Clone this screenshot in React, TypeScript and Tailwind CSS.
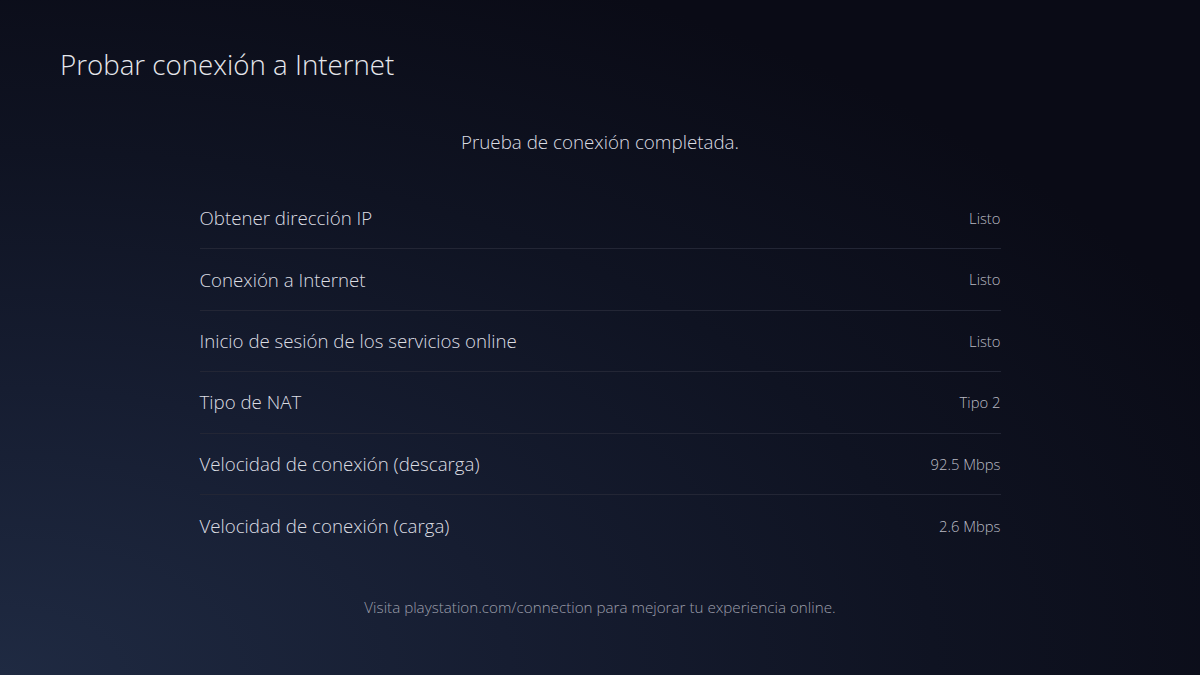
import React from 'react';

const results: { label: string; value: string }[] = [
  { label: 'Obtener dirección IP', value: 'Listo' },
  { label: 'Conexión a Internet', value: 'Listo' },
  { label: 'Inicio de sesión de los servicios online', value: 'Listo' },
  { label: 'Tipo de NAT', value: 'Tipo 2' },
  { label: 'Velocidad de conexión (descarga)', value: '92.5 Mbps' },
  { label: 'Velocidad de conexión (carga)', value: '2.6 Mbps' },
];

const App: React.FC = () => {
  return (
    <div
      className="w-[1200px] h-[675px] overflow-hidden flex flex-col bg-[radial-gradient(ellipse_at_0%_100%,#1f2a42_0%,#161d31_30%,#0f1322_55%,#0a0b16_80%)] font-['Open_Sans','Noto_Sans',sans-serif]"
    >
      {/* header */}
      <h1 className="pl-[60px] pt-[45px] text-[27.7px] leading-[38px] font-light text-[#e6e7ec]">
        Probar conexión a Internet
      </h1>

      {/* status */}
      <p className="mt-[46px] text-center text-[18.8px] leading-[26px] font-light text-[#dcdde3]">
        Prueba de conexión completada.
      </p>

      {/* results */}
      <div className="mx-auto mt-[33px] w-[801px] flex flex-col">
        {results.map((row, i) => (
          <div
            key={row.label}
            className={
              'h-[61.4px] flex items-center justify-between ' +
              (i < results.length - 1 ? 'border-b border-[#232635]' : '')
            }
          >
            <span className="text-[18.7px] font-light text-[#dcdde3]">
              {row.label}
            </span>
            <span className="text-[14.8px] font-light text-[#b9bac3]">
              {row.value}
            </span>
          </div>
        ))}
      </div>

      {/* footer */}
      <p className="mt-[41px] text-center text-[15.2px] leading-[20px] font-light text-[#9c9eaa]">
        Visita playstation.com/connection para mejorar tu experiencia online.
      </p>
    </div>
  );
};

export default App;
